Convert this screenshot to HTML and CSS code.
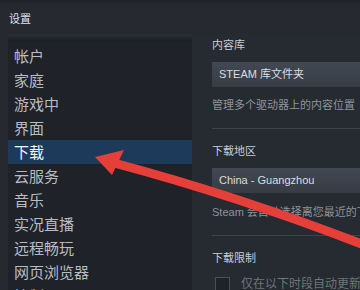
FILE: index.html
```html
<!DOCTYPE html>
<html lang="zh-CN">
<head>
<meta charset="utf-8">
<link rel="stylesheet" href="styles.css">
</head>
<body>
<div class="window">
  <div class="titlebar">设置</div>
  <div class="main">
    <nav class="sidebar">
      <div class="band"></div>
      <ul class="menu">
        <li>帐户</li>
        <li>家庭</li>
        <li>游戏中</li>
        <li>界面</li>
        <li class="active">下载</li>
        <li>云服务</li>
        <li>音乐</li>
        <li>实况直播</li>
        <li>远程畅玩</li>
        <li>网页浏览器</li>
        <li>控制器</li>
      </ul>
    </nav>
    <section class="content">
      <div class="label">内容库</div>
      <div class="dropdown">STEAM 库文件夹</div>
      <div class="desc">管理多个驱动器上的内容位置</div>
      <div class="divider"></div>
      <div class="label l2">下载地区</div>
      <div class="dropdown">China - Guangzhou</div>
      <div class="desc d2">Steam 会自动选择离您最近的下载服务器</div>
      <div class="divider"></div>
      <div class="label l2">下载限制</div>
      <div class="check"><span class="box"></span><span class="ctext">仅在以下时段自动更新游戏</span></div>
    </section>
  </div>
  <svg class="arrow" width="360" height="290" viewBox="0 0 360 290">
    <path d="M114 163 Q238 196 364 245" fill="none" stroke="#e63f3a" stroke-width="9"/>
    <polygon points="95,157 124,150 112,175" fill="#e63f3a"/>
  </svg>
</div>
</body>
</html>
```
FILE: styles.css
```css
html, body {
  margin: 0;
  padding: 0;
  background: #262930;
  overflow: hidden;
}
.window {
  position: relative;
  width: 360px;
  height: 290px;
  overflow: hidden;
  background: #262930;
  font-family: "Liberation Sans", "Noto Sans CJK SC", sans-serif;
}
.titlebar {
  height: 34px;
  box-sizing: border-box;
  padding: 11px 0 0 9px;
  font-size: 11px;
  line-height: 16px;
  color: #dfe2e6;
  background: linear-gradient(#1f2126 0, #24272d 4px, #262930 12px);
}
.main {
  display: flex;
  height: 256px;
}
.sidebar {
  margin-left: 8px;
  width: 184px;
  flex: none;
  background: #1f2228;
}
.band {
  height: 8px;
  background: linear-gradient(#2b2f37, #1a1d22);
}
.menu {
  list-style: none;
  margin: 0;
  padding: 2px 0 0 0;
}
.menu li {
  height: 24px;
  line-height: 25px;
  padding-left: 6px;
  font-size: 15px;
  color: #b9bdc1;
}
.menu li.active {
  background: #1d3a5a;
  color: #f2f4f6;
}
.content {
  flex: 1;
  min-width: 0;
  padding: 1px 0 0 20px;
  background: #262a31;
  overflow: hidden;
}
.label {
  height: 20px;
  line-height: 20px;
  font-size: 11px;
  color: #c9cdd2;
  white-space: nowrap;
}
.l2 {
  margin-top: 12px;
}
.dropdown {
  margin-top: 7px;
  height: 25px;
  line-height: 25px;
  padding-left: 7px;
  width: 200px;
  font-size: 11px;
  color: #dadde1;
  background: linear-gradient(#434953, #363b44);
  white-space: nowrap;
}
.desc {
  margin-top: 8px;
  height: 20px;
  line-height: 20px;
  font-size: 11px;
  color: #8e949b;
  white-space: nowrap;
}
.d2 {
  margin-top: 9px;
}
.divider {
  margin-top: 13px;
  height: 1px;
  width: 200px;
  background: #3e424a;
}
.check {
  margin-top: 9px;
  display: flex;
  align-items: flex-start;
  gap: 11px;
  white-space: nowrap;
}
.box {
  flex: none;
  margin-left: 3px;
  width: 13px;
  height: 13px;
  border: 1px solid #4a4f57;
  background: #1f2228;
}
.ctext {
  font-size: 12px;
  line-height: 14px;
  color: #6f757c;
}
.arrow {
  position: absolute;
  left: 0;
  top: 0;
}
```
